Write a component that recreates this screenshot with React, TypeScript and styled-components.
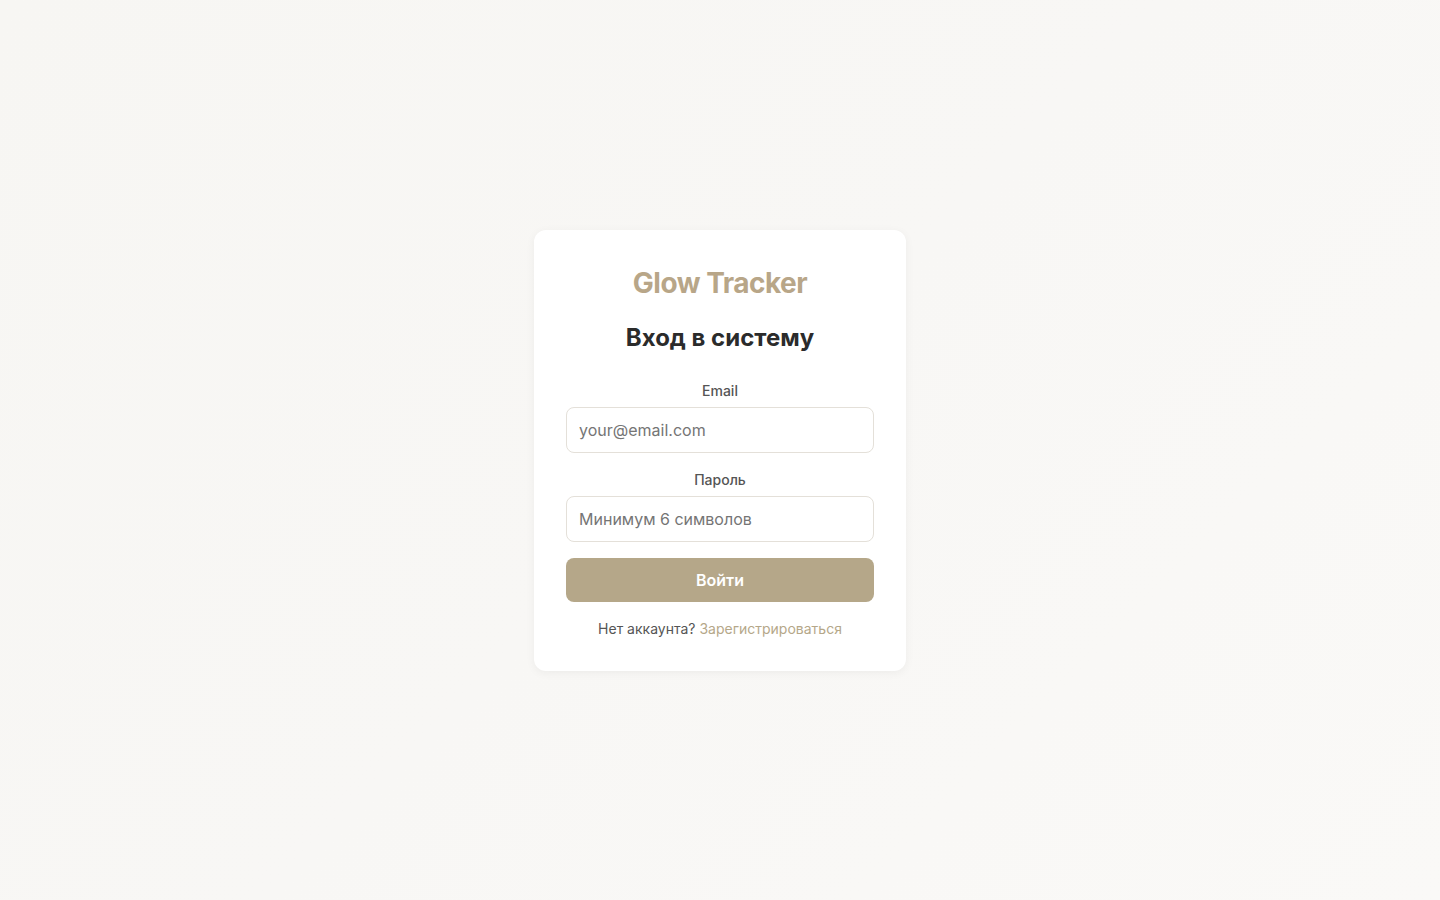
import React, { useState } from "react";
import styled, { createGlobalStyle } from "styled-components";

const GlobalStyle = createGlobalStyle`
  * {
    box-sizing: border-box;
  }
  body {
    margin: 0;
    font-family: "Inter", "Noto Sans", sans-serif;
    color: #2b2b2b;
  }
`;

const Page = styled.div`
  min-height: 100vh;
  display: flex;
  align-items: center;
  justify-content: center;
  background: linear-gradient(135deg, #f7f6f3 0%, #f8f7f5 50%, #faf9f7 100%);
`;

const Card = styled.div`
  width: 372px;
  background: #ffffff;
  border-radius: 12px;
  padding: 32px;
  box-shadow: 0 2px 10px rgba(0, 0, 0, 0.05);
  text-align: center;
`;

const Brand = styled.h1`
  margin: 0 0 16px;
  font-size: 28px;
  line-height: 42px;
  font-weight: 700;
  color: #b8a688;
  letter-spacing: -0.5px;
`;

const Heading = styled.h2`
  margin: 0 0 24px;
  font-size: 24px;
  line-height: 36px;
  font-weight: 700;
  color: #2b2b2b;
`;

const Form = styled.form`
  display: flex;
  flex-direction: column;
`;

const Field = styled.div`
  display: flex;
  flex-direction: column;
  margin-bottom: 16px;
`;

const Label = styled.label`
  font-size: 14px;
  line-height: 21px;
  font-weight: 500;
  color: #555555;
  margin-bottom: 6px;
`;

const Input = styled.input`
  height: 46px;
  width: 100%;
  padding: 0 12px;
  border: 1px solid #e4e0d9;
  border-radius: 8px;
  font-family: inherit;
  font-size: 16px;
  color: #2b2b2b;
  background: #ffffff;
  outline: none;

  &::placeholder {
    color: #757575;
  }

  &:focus {
    border-color: #b5a789;
  }
`;

const Submit = styled.button`
  height: 44px;
  width: 100%;
  border: none;
  border-radius: 8px;
  background: #b5a789;
  color: #ffffff;
  font-family: inherit;
  font-size: 16px;
  font-weight: 600;
  cursor: pointer;
`;

const Footer = styled.p`
  margin: 16px 0 0;
  font-size: 14px;
  line-height: 21px;
  color: #555555;
`;

const Link = styled.a`
  color: #b5a789;
  text-decoration: none;
  cursor: pointer;
`;

function App() {
  const [email, setEmail] = useState("");
  const [password, setPassword] = useState("");

  return (
    <Page>
      <GlobalStyle />
      <Card>
        <Brand>Glow Tracker</Brand>
        <Heading>Вход в систему</Heading>
        <Form onSubmit={(e) => e.preventDefault()}>
          <Field>
            <Label htmlFor="email">Email</Label>
            <Input
              id="email"
              type="email"
              placeholder="your@email.com"
              value={email}
              onChange={(e) => setEmail(e.currentTarget.value)}
            />
          </Field>
          <Field>
            <Label htmlFor="password">Пароль</Label>
            <Input
              id="password"
              type="password"
              placeholder="Минимум 6 символов"
              value={password}
              onChange={(e) => setPassword(e.currentTarget.value)}
            />
          </Field>
          <Submit type="submit">Войти</Submit>
        </Form>
        <Footer>
          Нет аккаунта? <Link>Зарегистрироваться</Link>
        </Footer>
      </Card>
    </Page>
  );
}

export default App;
